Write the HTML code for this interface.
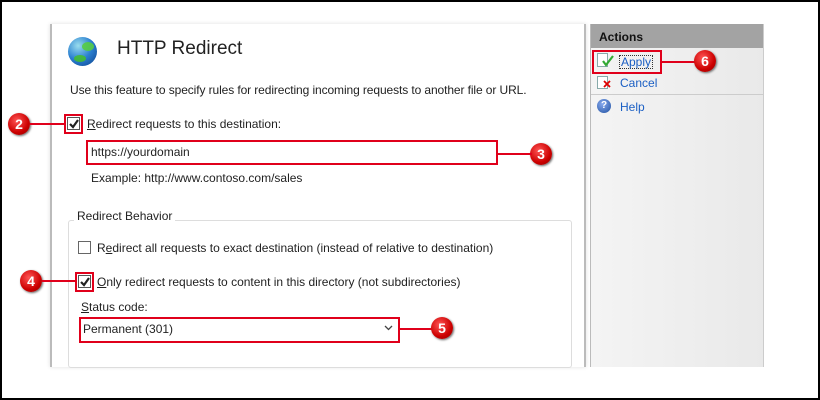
<!DOCTYPE html>
<html><head><style>
body{margin:0;width:820px;height:400px;position:relative;background:#fff;font-family:"Liberation Sans",sans-serif;font-size:12px;color:#222;overflow:hidden}
.abs{position:absolute}
.frame{left:0;top:0;width:816px;height:396px;border:2px solid #000}
.main{left:50px;top:24px;width:532px;height:343px;border-left:2px solid #bbb;border-right:2px solid #bbb;background:#fff;box-shadow:0 0 4px #ddd}
.act{left:590px;top:24px;width:172px;height:343px;border-left:1px solid #bbb;border-right:1px solid #ccc;background:linear-gradient(90deg,#f4f4f4,#e9e9e9)}
.ah{left:0;top:0;width:172px;height:24px;background:#a3a3a3;font-weight:bold;font-size:12px;color:#111;line-height:26px;text-indent:8px}
.link{color:#1b5fc4}
.cb{width:11px;height:11px;border:1px solid #555;background:#fff}
.red{border:2px solid #e0001b}
.badge{width:22px;height:22px;border-radius:50%;background:radial-gradient(circle at 40% 35%,#f55,#c00 60%,#800);color:#fff;font-weight:bold;font-size:14px;text-align:center;line-height:22px;box-shadow:1px 1px 2px #666}
.line{height:2px;background:#e0001b}
</style></head><body>
<div class="abs frame"></div>
<div class="abs main"></div>
<div class="abs act"><div class="abs ah">Actions</div>
<div class="abs" style="left:0;top:70px;width:172px;height:1px;background:#ccc"></div>
</div>
<div class="abs" style="left:68px;top:37px;width:29px;height:29px;border-radius:50%;background:radial-gradient(circle at 35% 30%,#9de,#2a7fd0 50%,#0b3f8a)"></div>
<div class="abs" style="left:82px;top:42px;width:12px;height:9px;border-radius:50%;background:#5c4;opacity:.9"></div>
<div class="abs" style="left:74px;top:55px;width:12px;height:7px;border-radius:50%;background:#4b3;opacity:.9"></div>
<div class="abs" style="left:117px;top:38px;font-size:19px;color:#222">HTTP Redirect</div>
<div class="abs" style="left:70px;top:83px;letter-spacing:-0.1px">Use this feature to specify rules for redirecting incoming requests to another file or URL.</div>
<div class="abs badge" style="left:8px;top:113px">2</div>
<div class="abs line" style="left:30px;top:123px;width:35px"></div>
<div class="abs red" style="left:64px;top:114px;width:15px;height:16px"></div>
<div class="abs cb" style="left:67px;top:117px"></div>
<svg class="abs" style="left:68px;top:118px" width="12" height="12"><path d="M2 6 L5 9 L10 2" stroke="#222" stroke-width="2.2" fill="none"/></svg>
<div class="abs" style="left:87px;top:117px"><u>R</u>edirect requests to this destination:</div>
<div class="abs red" style="left:86px;top:140px;width:408px;height:21px;background:#fff"></div>
<div class="abs" style="left:91px;top:145px">https://yourdomain</div>
<div class="abs badge" style="left:530px;top:143px">3</div>
<div class="abs line" style="left:496px;top:153px;width:36px"></div>
<div class="abs" style="left:91px;top:171px">Example: http://www.contoso.com/sales</div>
<div class="abs" style="left:68px;top:220px;width:502px;height:146px;border:1px solid #ddd;border-radius:3px"></div>
<div class="abs" style="left:74px;top:209px;background:#fff;padding:0 3px">Redirect Behavior</div>
<div class="abs cb" style="left:78px;top:241px;border-color:#666"></div>
<div class="abs" style="left:97px;top:241px">R<u>e</u>direct all requests to exact destination (instead of relative to destination)</div>
<div class="abs badge" style="left:20px;top:270px">4</div>
<div class="abs line" style="left:42px;top:280px;width:34px"></div>
<div class="abs red" style="left:75px;top:272px;width:15px;height:16px"></div>
<div class="abs cb" style="left:78px;top:275px"></div>
<svg class="abs" style="left:79px;top:276px" width="12" height="12"><path d="M2 6 L5 9 L10 2" stroke="#222" stroke-width="2.2" fill="none"/></svg>
<div class="abs" style="left:97px;top:275px"><u>O</u>nly redirect requests to content in this directory (not subdirectories)</div>
<div class="abs" style="left:81px;top:300px"><u>S</u>tatus code:</div>
<div class="abs red" style="left:79px;top:317px;width:317px;height:22px;background:#fff"></div>
<div class="abs" style="left:83px;top:322px">Permanent (301)</div>
<svg class="abs" style="left:384px;top:325px" width="9" height="6"><path d="M1 1 L4.5 4.5 L8 1" stroke="#444" stroke-width="1.3" fill="none"/></svg>
<div class="abs line" style="left:398px;top:328px;width:34px"></div>
<div class="abs badge" style="left:431px;top:317px">5</div>
<div class="abs red" style="left:592px;top:50px;width:66px;height:20px"></div>
<div class="abs" style="left:597px;top:53px;width:9px;height:12px;border:1px solid #8aa;background:#fff"></div>
<svg class="abs" style="left:602px;top:55px" width="12" height="12"><path d="M1 6 L4 10 L11 1" stroke="#3a3" stroke-width="2.2" fill="none"/></svg>
<div class="abs link" style="left:619px;top:55px;border:1px dotted #333;padding:0 1px;line-height:12px">Apply</div>
<div class="abs line" style="left:660px;top:61px;width:36px"></div>
<div class="abs badge" style="left:694px;top:50px">6</div>
<div class="abs" style="left:597px;top:76px;width:9px;height:11px;border:1px solid #8aa;background:#fff"></div>
<svg class="abs" style="left:603px;top:80px" width="8" height="8"><path d="M1 1 L7 7 M7 1 L1 7" stroke="#d00" stroke-width="1.8"/></svg>
<div class="abs link" style="left:620px;top:76px">Cancel</div>
<div class="abs" style="left:597px;top:99px;width:14px;height:14px;border-radius:50%;background:radial-gradient(circle at 40% 35%,#8ae,#1e4fa0);color:#fff;font-size:10px;font-weight:bold;text-align:center;line-height:14px">?</div>
<div class="abs link" style="left:620px;top:100px">Help</div>
</body></html>
